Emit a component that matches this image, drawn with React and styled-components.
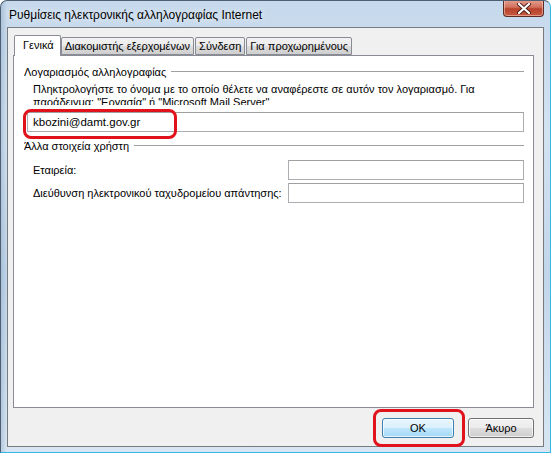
import React from "react";
import styled, { createGlobalStyle } from "styled-components";

const GlobalStyle = createGlobalStyle`
  html, body {
    margin: 0;
    padding: 0;
    background: #ffffff;
  }
  body {
    font-family: "Liberation Sans", Arial, sans-serif;
    font-size: 11px;
    color: #000;
  }
`;

const Window = styled.div`
  position: relative;
  width: 551px;
  height: 453px;
  box-sizing: border-box;
  display: flex;
  flex-direction: column;
  border: 1px solid #4d5f73;
  border-radius: 7px 7px 0 0;
  border-right-color: #35b8e6;
  border-bottom-color: #35b8e6;
  background:
    linear-gradient(90deg, rgba(120,150,180,0.35) 0px, rgba(255,255,255,0) 6px),
    linear-gradient(180deg, #c6d9ec 0%, #d3e2f1 30%, #c2d6ea 60%, #d8e6f3 100%);
  overflow: hidden;
`;

const TitleBar = styled.div`
  height: 26px;
  display: flex;
  align-items: flex-start;
  justify-content: space-between;
  padding: 0 6px 0 8px;
`;

const Title = styled.span`
  font-family: "Liberation Sans", Arial, sans-serif;
  font-size: 12px;
  line-height: 12px;
  margin-top: 8px;
  color: #000;
  text-shadow: 0 0 6px rgba(255,255,255,0.9);
`;

const CloseButton = styled.div`
  width: 41px;
  height: 17px;
  margin-top: -1px;
  box-sizing: border-box;
  border: 1px solid #5e2a24;
  border-top: none;
  border-radius: 0 0 4px 4px;
  background: linear-gradient(180deg, #e7a08f 0%, #d2705e 45%, #b8422c 55%, #c65a40 100%);
  box-shadow: inset 0 0 0 1px rgba(255,220,210,0.5);
  display: flex;
  align-items: center;
  justify-content: center;
`;

const Client = styled.div`
  flex: 1;
  margin: 0 6px 5px 6px;
  border: 1px solid #777a7e;
  background: #f0f0f0;
  display: flex;
  flex-direction: column;
  padding: 7px 9px 0 5px;
`;

const TabStrip = styled.div`
  display: flex;
  align-items: flex-end;
  height: 20px;
  padding-left: 1px;
  position: relative;
  z-index: 1;
`;

const Tab = styled.div`
  box-sizing: border-box;
  height: ${(p) => (p.$active ? "21px" : "18px")};
  padding: ${(p) => (p.$active ? "3px 6px 0 8px" : "2px 3px 0 3px")};
  margin-right: ${(p) => (p.$active ? "0" : "1px")};
  border: 1px solid #898c95;
  border-bottom: ${(p) => (p.$active ? "none" : "1px solid #898c95")};
  border-radius: 2px 2px 0 0;
  background: ${(p) =>
    p.$active
      ? "#ffffff"
      : "linear-gradient(180deg, #f2f2f2 0%, #ebebeb 50%, #dddddd 51%, #cfcfcf 100%)"};
  white-space: nowrap;
  font-size: 11px;
  line-height: 13px;
  ${(p) => (p.$active ? "margin-bottom: -1px;" : "")}
`;

const Panel = styled.div`
  height: 353px;
  box-sizing: border-box;
  background: #ffffff;
  border: 1px solid #898c95;
  padding: 10px 9px 0 10px;
  display: flex;
  flex-direction: column;
`;

const GroupHeader = styled.div`
  display: flex;
  align-items: center;
  height: 13px;
  margin-top: ${(p) => p.$top || 0}px;
`;

const GroupTitle = styled.span`
  white-space: nowrap;
  line-height: 13px;
  padding-right: 5px;
  color: #000;
`;

const GroupLine = styled.div`
  flex: 1;
  height: 0;
  border-top: 1px solid #a0a0a0;
  margin-top: -2px;
`;

const Description = styled.div`
  margin: 4px 0 0 9px;
  height: 22px;
  overflow: hidden;
  line-height: 13px;
  white-space: nowrap;
`;

const TextBox = styled.div`
  box-sizing: border-box;
  height: 20px;
  width: ${(p) => p.$width || "auto"};
  border: 1px solid #abadb3;
  border-top-color: #a0a0a0;
  background: #fff;
  padding: 0 5px;
  display: flex;
  align-items: center;
  font-size: 11px;
`;

const AccountBox = styled(TextBox)`
  margin: 7px 0 0 3px;
  font-size: 11.5px;
`;

const FieldRow = styled.div`
  display: flex;
  align-items: center;
  justify-content: space-between;
  margin-top: ${(p) => p.$top}px;
  padding-left: 9px;
`;

const FieldLabel = styled.span`
  white-space: nowrap;
`;

const ButtonRow = styled.div`
  display: flex;
  justify-content: flex-end;
  gap: 14px;
  margin-top: 10px;
`;

const Button = styled.div`
  box-sizing: border-box;
  width: ${(p) => p.$width}px;
  height: 20px;
  border: 1px solid ${(p) => (p.$default ? "#3c7fb1" : "#707070")};
  border-radius: 3px;
  background: ${(p) =>
    p.$default
      ? "linear-gradient(180deg, #eaf6fd 0%, #d9f0fc 50%, #bee6fd 51%, #a7d9f5 100%)"
      : "linear-gradient(180deg, #f2f2f2 0%, #ebebeb 50%, #dddddd 51%, #cfcfcf 100%)"};
  box-shadow: inset 0 0 0 1px rgba(255,255,255,0.7);
  display: flex;
  align-items: center;
  justify-content: center;
  font-size: 11px;
`;

const Highlight = styled.div`
  position: absolute;
  box-sizing: border-box;
  border: 3px solid #e0121c;
  border-radius: 8px;
  pointer-events: none;
`;

export default function App() {
  return (
    <>
      <GlobalStyle />
      <Window>
        <TitleBar>
          <Title>Ρυθμίσεις ηλεκτρονικής αλληλογραφίας Internet</Title>
          <CloseButton>
            <svg width="14" height="11" viewBox="0 0 14 11">
              <path
                d="M2 1 L12 10 M12 1 L2 10"
                stroke="#4a1e18"
                strokeWidth="4"
                strokeLinecap="round"
              />
              <path
                d="M2 1 L12 10 M12 1 L2 10"
                stroke="#ffffff"
                strokeWidth="2.2"
                strokeLinecap="round"
              />
            </svg>
          </CloseButton>
        </TitleBar>
        <Client>
          <TabStrip>
            <Tab $active>Γενικά</Tab>
            <Tab>Διακομιστής εξερχομένων</Tab>
            <Tab>Σύνδεση</Tab>
            <Tab>Για προχωρημένους</Tab>
          </TabStrip>
          <Panel>
            <GroupHeader>
              <GroupTitle>Λογαριασμός αλληλογραφίας</GroupTitle>
              <GroupLine />
            </GroupHeader>
            <Description>
              Πληκτρολογήστε το όνομα με το οποίο θέλετε να αναφέρεστε σε αυτόν τον λογαριασμό. Για
              <br />
              παράδειγμα: "Εργασία" ή "Microsoft Mail Server"
            </Description>
            <AccountBox>kbozini@damt.gov.gr</AccountBox>
            <GroupHeader $top={8}>
              <GroupTitle>Άλλα στοιχεία χρήστη</GroupTitle>
              <GroupLine />
            </GroupHeader>
            <FieldRow $top={7}>
              <FieldLabel>Εταιρεία:</FieldLabel>
              <TextBox $width="236px" />
            </FieldRow>
            <FieldRow $top={3}>
              <FieldLabel>Διεύθυνση ηλεκτρονικού ταχυδρομείου απάντησης:</FieldLabel>
              <TextBox $width="236px" />
            </FieldRow>
          </Panel>
          <ButtonRow>
            <Button $default $width={72}>OK</Button>
            <Button $width={66}>Άκυρο</Button>
          </ButtonRow>
        </Client>
        <Highlight style={{ left: 22, top: 108, width: 154, height: 30 }} />
        <Highlight style={{ left: 372, top: 408, width: 92, height: 38 }} />
      </Window>
    </>
  );
}
